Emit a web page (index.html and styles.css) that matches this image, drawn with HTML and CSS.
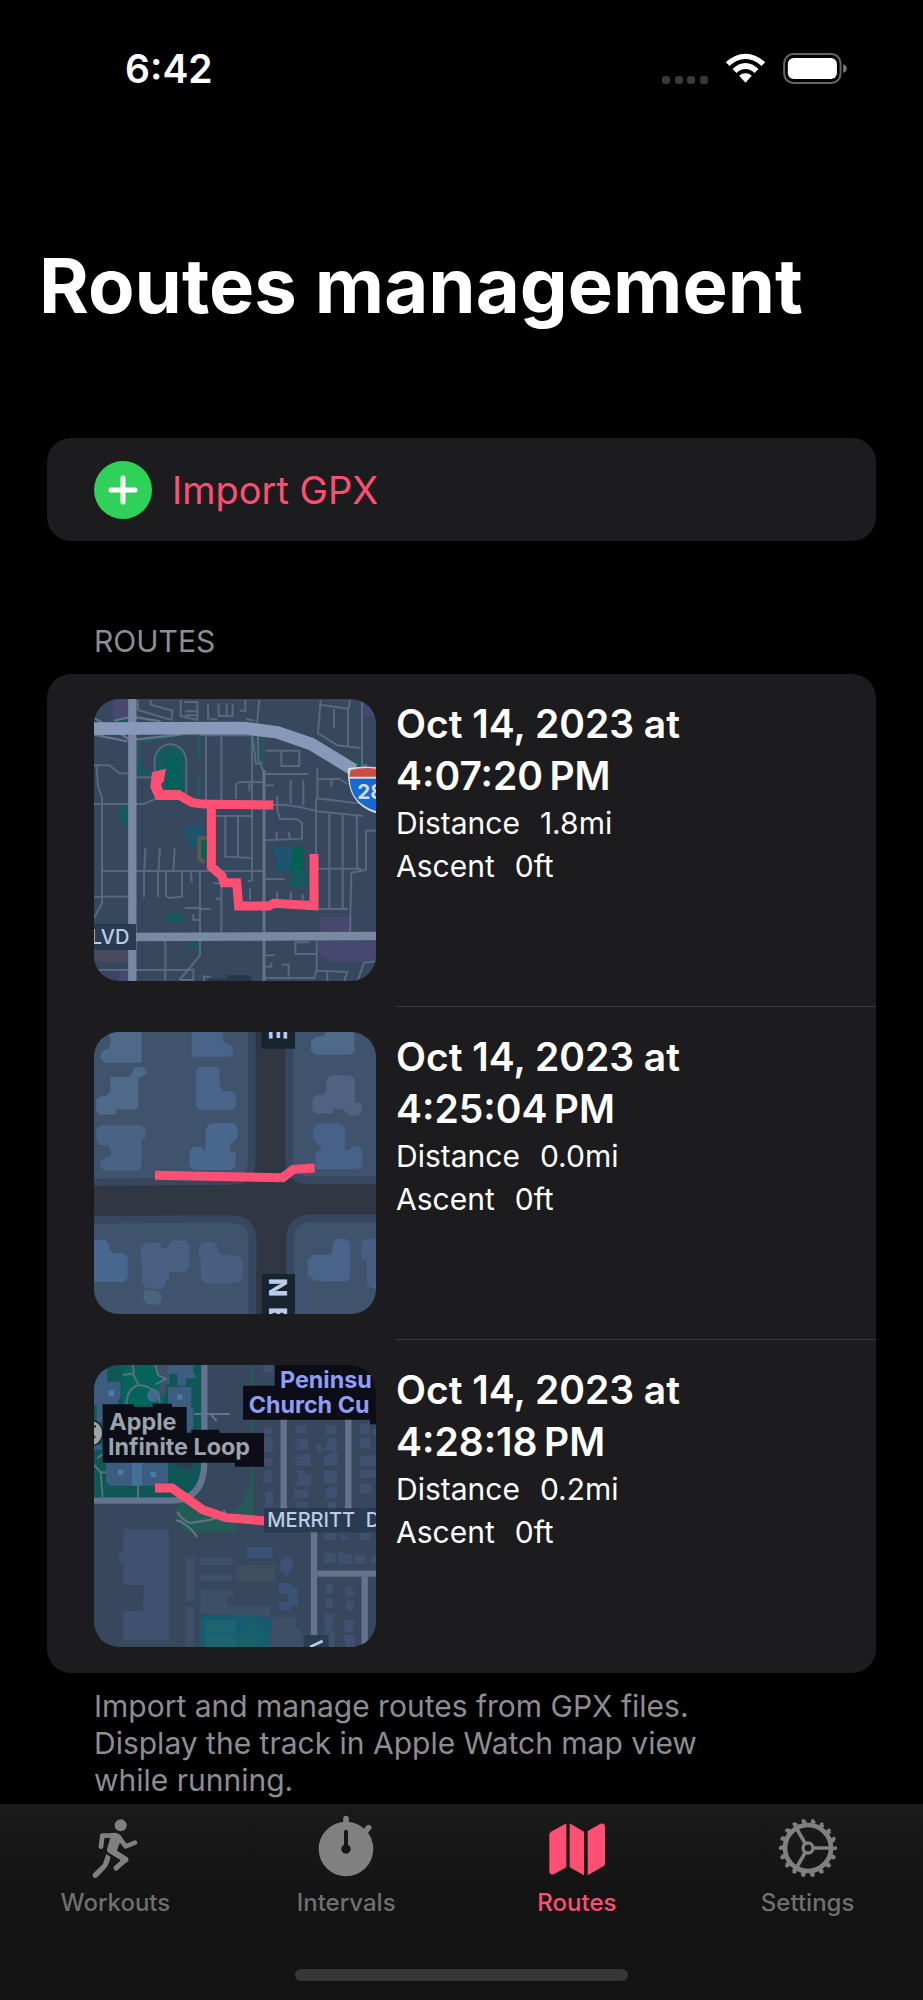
FILE: index.html
```html
<!DOCTYPE html>
<html lang="en">
  <head>
    <meta charset="UTF-8" />
    <meta name="viewport" content="width=device-width, initial-scale=1.0" />
    <title>Routes management</title>
    <link rel="stylesheet" href="styles.css">
  </head>

  <body>
    <header class="status-bar">
      <span class="time">6:42</span>
      <div class="status-icons">
        <svg class="dots" viewBox="0 0 46 8" width="46" height="8" fill="#3a3a3a">
          <rect x="0" width="8" height="8" rx="3" />
          <rect x="13" width="8" height="8" rx="3" />
          <rect x="25" width="8" height="8" rx="3" />
          <rect x="38" width="8" height="8" rx="3" />
        </svg>
        <svg class="wifi" viewBox="254 40 122 90" width="41" height="30" fill="#fff">
          <path d="M256 68Q283 42 315 42T374 68L363 79Q341 58 315 58T267 79Z" />
          <path d="M276 88Q294 70 315 70T354 88L342 100Q330 88 315 88T288 100Z" />
          <path d="M296 108Q304 101 315 101T334 108L315 129Z" />
        </svg>
        <svg class="battery" viewBox="426 38 196 94" width="65" height="31">
          <rect x="429" y="41" width="171" height="88" rx="28" fill="none" stroke="#666" stroke-width="6" />
          <rect x="440" y="53" width="149" height="64" rx="18" fill="#fff" />
          <path d="M608 71Q619 76 619 85T608 99Z" fill="#777" />
        </svg>
      </div>
    </header>

    <main>
      <h1>Routes management</h1>

      <button type="button" class="card import-btn">
        <svg viewBox="0 0 58 58" width="58" height="58">
          <circle cx="29" cy="29" r="29" fill="#30d158" />
          <path d="M29 17V41M17 29H41" stroke="#fff" stroke-width="5" stroke-linecap="round" />
        </svg>
        <span>Import GPX</span>
      </button>

      <h2 class="section-title">ROUTES</h2>
      <ul class="card routes">
        <li class="route">
          <svg class="map" viewBox="30 27 846 846">
            <rect x="30" y="27" width="846" height="846" fill="#37475d" />
            <g fill="#474770">
              <path d="M86 27H134V84H86ZM836 27H876V80H840ZM708 680H804V730H708ZM698 754H876V810Q800 822 740 815Q700 800 698 754ZM104 852L118 840H134V873H104Z" />
            </g>
            <path d="M30 780H132V815H30Z" fill="#484a60" />
            <path d="M372 873V866H430V856H502V873Z" fill="#283747" />
            <g fill="#165a5d">
              <path d="M216 200Q225 164 262 164Q300 170 306 210V312H240L216 250ZM160 207H174V244H210V258H160ZM106 346H132V404L106 396ZM248 670H296V697H248ZM314 756H346V784H334V772H314ZM618 542H676V594H618ZM796 212H830V226H800ZM90 96L132 88V98H90Z" />
            </g>
            <path d="M246 200H284V300H246Z" fill="#04605b" />
            <path d="M302 408H360V470H314V434H302ZM562 470H630V542H572L582 514Z" fill="#1b566e" />
            <path d="M628 470H658V542H612L628 508ZM352 444H370V505H352Z" fill="#00634f" />
            <path d="M370 444H346V505L360 518" fill="none" stroke="#59594e" stroke-width="12" />
            <g fill="none" stroke="#235b56" stroke-width="8">
              <path d="M162 236V158L300 134H344V205M344 260V315M514 142L518 222H536V145" />
            </g>
            <g fill="none" stroke="#59687d" stroke-width="6">
              <path d="M30 226H76L106 250H134M38 230L42 290L54 322V640L30 684M30 342H180L216 326M56 543H538M30 620H134M30 840H328" />
              <path d="M158 262H210M212 250V205Q222 164 262 162Q302 170 307 212V312" />
              <path d="M366 138V330M412 138V330M346 136H510M504 138V570L492 574M396 378H502M424 380V500L500 504M462 380V500" />
              <path d="M162 30V60L262 90L266 62L200 44V30M290 30V78L340 90V64H304M304 76H340M340 64V36H300M372 40V88M404 40V78H446V42M428 40V76M484 30V62H466M486 88L512 92M376 88H400" />
              <path d="M526 30L520 92L524 212L540 248M506 142L516 222L536 218" />
              <path d="M184 474L180 560V622M228 474L222 560V622M272 474L268 540M246 545V618L256 624L294 620V545M320 546L324 576M348 545V796L286 870M412 560V730M244 752V873M302 654H350M350 657H380M328 672V690H346M388 580H412M394 626H412M498 596V630M328 836V870H290" />
              <path d="M544 182H646V228H592V182M544 252H674M456 326V284L464 276H536M496 280V304M544 286H570M620 270V340M658 270V346M544 345L600 344L650 352L700 364L836 378M580 318V360L588 386L640 388L654 398V446L544 451M578 426V446M614 426L618 446M544 567H602" />
              <path d="M710 30L702 130L760 166L830 174M708 44L792 56V170M750 56V116M794 56L798 30M834 30V226H850M700 235V325L820 340M700 268L766 266L790 282M742 268V290M696 325V660M736 372V656M776 374V656M818 378L820 536M700 536H832M876 422H846V540L802 548L798 730M700 657H792M634 754V792H696M634 757H676M698 754V840L690 864H544M580 604V630M620 604V630M656 612V630M544 796H572M544 830H562V818M594 824H614V860M700 842L790 846L780 873M730 846V873M876 814L840 818L820 873M360 856V873M360 860H380" />
            </g>
            <path d="M540 240V873" stroke="#64738a" stroke-width="9" />
            <path d="M30 84L140 150L290 134M30 134L130 154M90 92L145 80L230 94" fill="none" stroke="#64748b" stroke-width="7" />
            <path d="M145 27V873M145 741L876 738" fill="none" stroke="#7989a3" stroke-width="25" />
            <path d="M30 116L480 114L580 127L682 162L810 240" fill="none" stroke="#8798b9" stroke-width="38" />
            <path d="M204 247L246 236L239 276L231 281L237 300H290L292 330H216L199 292Z" fill="#ff5074" />
            <path d="M270 316H286L325 338Q350 343 380 343L568 345M382 345V530L414 558L420 578H458L464 648H555L570 640L690 647V492" fill="none" stroke="#ff5074" stroke-width="27" />
            <path d="M792 234Q840 226 876 232V370Q785 342 792 234Z" fill="#d4d8df" />
            <path d="M800 240Q840 231 876 236V260H796Z" fill="#c84e45" />
            <path d="M797 266H876V363Q800 340 797 266Z" fill="#1769d2" />
            <text class="map-shield" x="820" y="326">28</text>
            <path d="M30 702H156V780H30Z" fill="#293b51" />
            <text class="map-street" x="136" y="762" text-anchor="end">LVD</text>
          </svg>
          <div class="route-info">
            <h3>Oct 14, 2023 at<br />4:07:20&#8239;PM</h3>
            <p><span>Distance</span><span>1.8mi</span></p>
            <p><span>Ascent</span><span>0ft</span></p>
          </div>
        </li>

        <li class="route">
          <svg class="map" viewBox="30 27 846 846">
            <rect x="30" y="27" width="846" height="846" fill="#303642" />
            <g fill="#3f536d" stroke="#37475f" stroke-width="23">
              <path d="M0 0H503V420Q500 474 440 474L0 478Z" />
              <path d="M616 0H900V472H670Q616 468 616 420Z" />
              <path d="M0 590L440 588Q504 590 505 650V900H0Z" />
              <path d="M900 586H680Q618 588 618 650V900H900Z" />
            </g>
            <g fill="#4e6a88" stroke="#4e6a88" stroke-width="10" stroke-linejoin="round">
              <path d="M78 32H168V114H62L54 100L60 88L80 80L86 52Z" />
              <path d="M84 166H140L156 138H176L182 148L172 156L158 158V250L148 254H92V270H50L42 262V232L54 224H68L84 208Z" />
              <path d="M722 44L730 32H806V84L798 90H696L686 80V56L696 46Z" />
            </g>
            <g fill="#4a6385" stroke="#4a6385" stroke-width="10" stroke-linejoin="round">
              <path d="M52 312H170L180 322V342H168V430L160 438H62L54 430V416L66 408H78L86 396V380L74 362H50L42 352V322Z" />
              <path d="M186 807H218L228 818V832L218 840H194L184 830V816Z" fill="#4a647f" stroke="#4a647f" />
            </g>
            <g fill="#4a638a" stroke="#4a638a" stroke-width="10" stroke-linejoin="round">
              <path d="M328 32H412V56L424 66H434L442 76V88L434 96H328Z" />
              <path d="M348 136H394L402 144V192L418 210H444L452 220V246L444 256H348L340 246V146Z" />
              <path d="M382 306H448L456 316V342L434 362V390H450V426L440 436H332L322 426V386L332 376H350V386H370V318Z" fill="#4a678d" stroke="#4a678d" />
              <path d="M702 306H768L778 316V386H800L808 374H820L830 386V426L822 434H700V390H716V370L692 346V318Z" fill="#486189" stroke="#486189" />
              <path d="M30 656H62L70 664V680L86 696H118L126 704V762L118 772H30Z" fill="#47678f" stroke="#47678f" />
              <path d="M188 665H226V680H250L270 657H300L310 668V732L300 742H250V766H240V784L230 792H190L180 780V712L176 704V675Z" fill="#496082" stroke="#496082" />
              <path d="M360 662H386L396 674V690L412 702H460L470 712V762L460 772H444V776H368L356 764V710L350 702V674Z" fill="#485f82" stroke="#485f82" />
              <path d="M760 652H784L794 662V762L784 771H714V768H692L676 752V712L688 701H740L750 690V664Z" />
              <path d="M842 654H880V790H862L854 780V704H838V664Z" fill="#495f82" stroke="#495f82" />
            </g>
            <path d="M742 162H798L808 172V244H828V264L818 273H798L776 252H742V267H700L690 258V230L702 220H718L732 206V172Z" fill="#4f6282" stroke="#4f6282" stroke-width="10" stroke-linejoin="round" />
            <path d="M213 457L596 464L628 439L692 435" fill="none" stroke="#ff5074" stroke-width="27" />
            <path d="M532 27H633V77H532ZM534 753H633V873H534Z" fill="#172430" />
            <text class="map-rotated" transform="translate(556 5) rotate(90)">E</text>
            <text class="map-rotated" transform="translate(556 765) rotate(90)">N</text>
            <text class="map-rotated" transform="translate(556 852) rotate(90)">E</text>
          </svg>
          <div class="route-info">
            <h3>Oct 14, 2023 at<br />4:25:04&#8239;PM</h3>
            <p><span>Distance</span><span>0.0mi</span></p>
            <p><span>Ascent</span><span>0ft</span></p>
          </div>
        </li>

        <li class="route">
          <svg class="map" viewBox="30 30 846 846">
            <rect x="30" y="30" width="846" height="846" fill="#37475d" />
            <path d="M30 30H360V330Q350 420 270 434H30Z" fill="#0f5656" />
            <path d="M116 30H240V150H116Z" fill="#04635a" />
            <path d="M206 30H250L252 64L240 130L222 100L236 76Z" fill="#414f67" />
            <path d="M500 30H508V480L444 476Q490 440 500 360ZM466 170H508V200L490 192ZM300 440Q275 450 274 476L300 530L458 532V500L350 470Z" fill="#235c57" />
            <g fill="#3c5d80">
              <path d="M30 42H70V80H110V122L100 150H30ZM252 96H322V160H328V230H306V160H252ZM254 30H328V56H334V70H306V92H280V56H256V90H250V40ZM66 322H252V384H244V392H74V384H66ZM38 150H56V200H38ZM30 270H56V284H30Z" />
            </g>
            <path d="M144 322H174V392H144Z" fill="#437099" />
            <circle cx="209" cy="121" r="20" fill="#3f6a8b" />
            <path d="M74 106H90V124H74ZM279 118H295V134H279ZM102 344H118V360H102ZM200 350H215V366H200Z" fill="#4a7caa" />
            <path d="M268 326L300 342L326 346V322H268Z" fill="#2b4054" />
            <g fill="none" stroke="#59707f" stroke-width="6">
              <path d="M116 60L146 56L164 90M146 30L150 56M214 30L222 60L246 72L214 88M164 90Q128 100 127 150M164 90Q222 96 228 144M162 392V430M30 330L50 352L56 426M40 310L58 296M50 352H66" />
            </g>
            <path d="M330 177H438M382 180L398 198M280 470Q296 498 320 504Q380 496 434 480M276 496Q308 502 340 546M418 464L434 490" fill="none" stroke="#64738a" stroke-width="6" />
            <path d="M361 30V320Q361 432 265 437H30" fill="none" stroke="#64738e" stroke-width="19" />
            <g fill="#40516f">
              <path d="M118 522H254V856H118V768H176L180 690H118V620H106V590H118Z" />
              <path d="M306 606H334V740H306ZM304 756H330V876H304ZM347 606H446V630H347ZM347 656H446V679H347ZM349 708H446V724H430V752H446V778H349ZM446 752H558V784H446ZM566 786H636V820H648L656 876H554Z" fill="#3d4e67" />
              <path d="M456 632L574 628V682H456Z" fill="#3d4e5e" />
              <path d="M488 576H566V610H488ZM596 606L612 602L626 616V640L608 666L586 640ZM584 684H624V696H642V752H620V766H584V740H612V716H584Z" fill="#3b5176" />
              <path d="M538 30H568V52H536ZM540 220L562 214L568 236H536ZM536 250L556 242L568 270V290H540ZM540 310H566V332H544ZM544 348L566 344L562 384H536ZM544 410H568V456H544Z" />
              <path d="M636 210H668V236H632ZM632 252H650L672 250V284H632V268H650ZM632 310L660 296H680V332H632V318H656ZM636 346H662V360H680V392H632V380H648ZM630 404H672V430H628ZM640 440H670V456H640ZM696 270L708 266L718 290H700Z" />
              <path d="M724 210H758V238H724ZM734 250H760L756 292L720 284ZM720 304L746 292H762V332H720ZM720 346H760V384H720ZM724 406L740 394H760V430H724ZM732 442H756V458H732Z" />
              <path d="M828 206H856L858 236H828ZM828 250L856 246L862 280H828ZM828 304H860V334H828ZM830 346H876V366L828 372ZM828 386H862V416H828ZM860 300H876V334H860ZM866 220H876V240H866Z" />
              <path d="M724 534H756V554H720ZM776 534L798 556H770ZM828 534H858V554H828ZM722 592L756 596L752 624H720ZM762 590L804 600V626H762ZM812 600H844V624H812ZM858 606L876 600V624H858Z" />
              <path d="M728 688H746V716L720 718ZM722 732L746 730L744 760L726 758ZM720 776H752L744 808L748 828H724ZM722 834L752 830V876H736ZM786 696L804 694L812 720L794 728L784 714ZM786 736L812 740L806 768L784 762ZM778 794L812 796L806 832L784 830ZM780 840L812 838V876H786Z" />
            </g>
            <path d="M348 784L400 780H532V788H562L556 876H348Z" fill="#165b70" />
            <path d="M364 794H456V834H364ZM364 838H456V876H364Z" fill="#1d6370" />
            <path d="M488 798H518V822H550V856H530V876H462V828H488Z" fill="#17606a" />
            <g fill="none" stroke="#64738e" stroke-width="19">
              <path d="M599 190V470M793 190V470M690 530V850M700 656H876M842 666V876M872 850V876" />
            </g>
            <path d="M213 399H264L356 464L426 488L550 498" fill="none" stroke="#ff5074" stroke-width="27" />
            <path d="M572 30H876V208H858V194H477V92H572Z" fill="#0c0d16" />
            <text class="map-place church" x="588" y="98">Peninsu</text>
            <text class="map-place church" x="494" y="175">Church Cu</text>
            <circle cx="16" cy="234" r="40" fill="#9da5a8" stroke="#18222b" stroke-width="4" />
            <path d="M36 214H28M34 246H28" stroke="#25323c" stroke-width="7" />
            <path d="M56 148H150V156H206V146H264V156H308V234H322V224H406V234H540V335H453V323H56Z" fill="#0c0d16" />
            <text class="map-place" x="76" y="224">Apple</text>
            <text class="map-place" x="72" y="300">Infinite Loop</text>
            <path d="M540 460H838L846 452V460H876V532H540Z" fill="#293b51" />
            <text class="map-street" x="550" y="517">MERRITT</text>
            <text class="map-street" x="845" y="517">D</text>
            <path d="M660 840H734V876H660Z" fill="#293b51" />
            <path d="M678 876L716 858" stroke="#bccbe6" stroke-width="8" />
          </svg>
          <div class="route-info">
            <h3>Oct 14, 2023 at<br />4:28:18&#8239;PM</h3>
            <p><span>Distance</span><span>0.2mi</span></p>
            <p><span>Ascent</span><span>0ft</span></p>
          </div>
        </li>
      </ul>
      <p class="note">Import and manage routes from GPX files. Display the track in Apple Watch map view while running.</p>
    </main>

    <nav class="tab-bar">
      <div class="tabs">
        <a href="#workouts">
          <svg viewBox="247 76 192 192" width="64" height="64" fill="none" stroke="#808080" stroke-linecap="round" stroke-linejoin="round">
            <circle cx="360" cy="107" r="18" fill="#808080" stroke="none" />
            <path d="M301 171L305 138H342" stroke-width="14" />
            <path d="M354 142L375 170L403 159" stroke-width="14" />
            <path d="M328 131Q352 125 363 142L368 156L356 162L349 183L380 203Q387 210 381 216L368 222L356 209L326 191Q316 184 320 174L329 144Z" fill="#808080" stroke="none" />
            <path d="M375 210L346 235" stroke-width="15" />
            <path d="M317 193L330 202Q325 222 318 233L290 263Q283 268 277 262Q274 256 278 251L307 223Z" fill="#808080" stroke="none" />
          </svg>
          Workouts
        </a>
        <a href="#intervals">
          <svg viewBox="941 76 192 192" width="64" height="64" fill="none" stroke-linecap="round">
            <circle cx="1037" cy="178" r="82" fill="#808080" />
            <path d="M1037 87V110M1096 124L1105 114" stroke="#808080" stroke-width="17" />
            <path d="M1037 126V170" stroke="#151515" stroke-width="12" />
            <circle cx="1037" cy="178" r="14" fill="#151515" />
          </svg>
          Intervals
        </a>
        <a href="#routes" class="active">
          <svg viewBox="252 76 192 192" width="64" height="64" fill="#ff5074">
            <path d="M316 101V233L280 253Q265 259 265 244V134Q265 129 270 126Z" />
            <path d="M326 101L369 126V257L326 233Z" />
            <path d="M380 124L417 103Q431 98 432 112V222Q432 227 427 230L380 257Z" />
          </svg>
          Routes
        </a>
        <a href="#settings">
          <svg viewBox="944 78 192 192" width="64" height="64" fill="none" stroke="#808080">
            <circle cx="1040" cy="177" r="69" stroke-width="14" />
            <circle cx="1040" cy="177" r="79" stroke-width="9" pathLength="180" stroke-dasharray="5 5" stroke-dashoffset="2.5" />
            <circle cx="1040" cy="177" r="84" stroke-width="7" pathLength="180" stroke-dasharray="3 7" stroke-dashoffset="1.5" />
            <circle cx="1040" cy="177" r="15" stroke-width="10" />
            <path d="M1058 177H1106M1031 162L1006 119M1031 192L1006 235" stroke-width="11" />
          </svg>
          Settings
        </a>
      </div>
      <div class="home-indicator"></div>
    </nav>
  </body>
</html>
```
FILE: styles.css
```css
* {
  box-sizing: border-box;
}

body {
  margin: 0;
  min-height: 100vh;
  display: flex;
  flex-direction: column;
  background-color: #000;
  color: #fff;
  font-family: Inter, sans-serif;
}

h1, h2, h3, p, ul {
  margin: 0;
  padding: 0;
}

svg {
  flex-shrink: 0;
}

.status-bar {
  display: flex;
  justify-content: space-between;
  align-items: center;
  height: 136px;
  padding: 0 75px 0 125px;
}

.time {
  font-size: 39px;
  font-weight: 600;
}

.status-icons {
  display: flex;
  align-items: center;
  gap: 17px;
}

.dots {
  align-self: flex-end;
}

main {
  flex: 1;
  padding: 102px 47px 0;
}

h1 {
  margin: 0 -8px;
  font-size: 76px;
  line-height: 94px;
  font-weight: 700;
}

.card {
  width: 100%;
  background-color: #1c1c1e;
  border-radius: 24px;
}

.import-btn {
  display: flex;
  align-items: center;
  gap: 20px;
  height: 103px;
  margin-top: 106px;
  padding: 0 47px;
  border: none;
  color: #ff5074;
  font-family: inherit;
  font-size: 38px;
  cursor: pointer;
}

.section-title {
  margin: 80px 47px 13px;
  color: #8d8d93;
  font-size: 30px;
  line-height: 40px;
  font-weight: 400;
}

.routes {
  list-style: none;
}

.route {
  display: flex;
  gap: 20px;
  padding-left: 47px;
}

.map {
  width: 282px;
  height: 282px;
  margin: 25px 0 26px;
  border-radius: 25px;
}

.route-info {
  flex: 1;
  padding-top: 24px;
  border-bottom: 1px solid #3a3a3c;
}

.route:last-child .route-info {
  border-bottom: none;
}

.route h3 {
  font-size: 39px;
  line-height: 52px;
  font-weight: 600;
}

.route p {
  display: flex;
  gap: 20px;
  font-size: 30px;
  line-height: 43px;
}

.note {
  max-width: 740px;
  padding: 15px 47px 0;
  color: #8d8d93;
  font-size: 30px;
  line-height: 37px;
}

.tab-bar {
  height: 196px;
  display: flex;
  flex-direction: column;
  justify-content: space-between;
  align-items: center;
  padding: 11px 0 19px;
  background: linear-gradient(#1a1a1a, #131313 50%);
}

.tabs {
  display: flex;
  width: 100%;
}

.tabs a {
  flex: 1;
  display: flex;
  flex-direction: column;
  align-items: center;
  gap: 9px;
  color: #6f6f6f;
  font-size: 24px;
  line-height: 30px;
  font-weight: 500;
  text-decoration: none;
}

.tabs .active {
  color: #ff5074;
}

.home-indicator {
  width: 36%;
  height: 12px;
  border-radius: 6px;
  background-color: #363636;
}

/* map labels */
.map-street {
  fill: #bccbe6;
  font-size: 60px;
  font-weight: 500;
}

.map-place {
  fill: #98a4a9;
  font-size: 70px;
  font-weight: 700;
}

.church {
  fill: #8f9df5;
}

.map-shield {
  fill: #d4d8df;
  font-size: 62px;
  font-weight: 700;
}

.map-rotated {
  fill: #bccbe6;
  font-size: 74px;
  font-weight: 800;
}
```
